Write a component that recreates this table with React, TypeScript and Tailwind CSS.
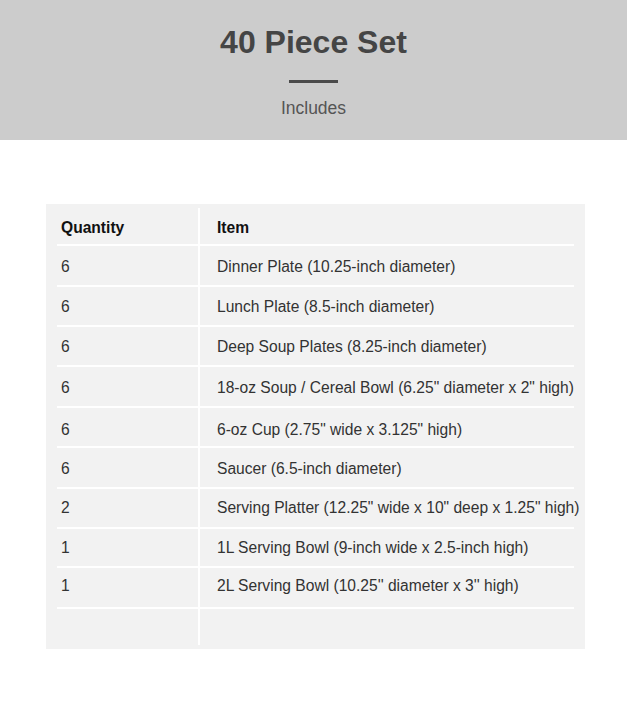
import React from "react";

const rows: [string, string][] = [
  ["6", "Dinner Plate (10.25-inch diameter)"],
  ["6", "Lunch Plate (8.5-inch diameter)"],
  ["6", "Deep Soup Plates (8.25-inch diameter)"],
  ["6", "18-oz Soup / Cereal Bowl (6.25\" diameter x 2\" high)"],
  ["6", "6-oz Cup (2.75\" wide x 3.125\" high)"],
  ["6", "Saucer (6.5-inch diameter)"],
  ["2", "Serving Platter (12.25\" wide x 10\" deep x 1.25\" high)"],
  ["1", "1L Serving Bowl (9-inch wide x 2.5-inch high)"],
  ["1", "2L Serving Bowl (10.25'' diameter x 3'' high)"],
];

const heights = ["h-[41px]", "h-[40px]", "h-[40px]", "h-[41px]", "h-[40px]", "h-[41px]", "h-[40px]", "h-[39px]", "h-[41px]"];
const pads = ["pt-[3px]", "pt-[2px]", "pt-[2px]", "pt-[3px]", "pt-[6px]", "pt-[2px]", "", "", "pb-[3px]"];

export default function App() {
  return (
    <div className="w-[627px] h-[720px] bg-white" style={{ fontFamily: '"Liberation Sans", Arial, sans-serif' }}>
      <div className="h-[140px] bg-[#cccccc] flex flex-col items-center pt-[24px]">
        <h1 className="text-[32px] leading-[36px] font-bold text-[#454545]">40 Piece Set</h1>
        <div className="w-[49px] h-[3px] bg-[#4a4a4a] mt-[20px]"></div>
        <div className="text-[17.5px] leading-[20px] text-[#555555] mt-[15px]">Includes</div>
      </div>
      <div className="mt-[64px] ml-[46px] w-[539px] h-[445px] bg-[#f2f2f2] px-[11px] pt-[4px]">
        <div className="flex h-[38px] border-b-2 border-white">
          <div className="w-[143px] shrink-0 border-r-2 border-white pl-[4px] flex items-center pt-[4px] text-[15.6px] font-bold text-[#111111]">Quantity</div>
          <div className="flex-1 pl-[17px] flex items-center pt-[4px] text-[15.6px] font-bold text-[#111111]">Item</div>
        </div>
        {rows.map(([q, item], i) => (
          <div key={i} className={`flex ${heights[i]} border-b-2 border-white`}>
            <div className={`w-[143px] shrink-0 border-r-2 border-white pl-[4px] flex items-center text-[15.6px] text-[#333333] ${pads[i]}`}>{q}</div>
            <div className={`flex-1 min-w-0 pl-[17px] flex items-center text-[15.6px] text-[#333333] whitespace-nowrap ${pads[i]}`}>{item}</div>
          </div>
        ))}
        <div className="flex h-[36px]">
          <div className="w-[143px] shrink-0 border-r-2 border-white"></div>
          <div className="flex-1"></div>
        </div>
      </div>
    </div>
  );
}
